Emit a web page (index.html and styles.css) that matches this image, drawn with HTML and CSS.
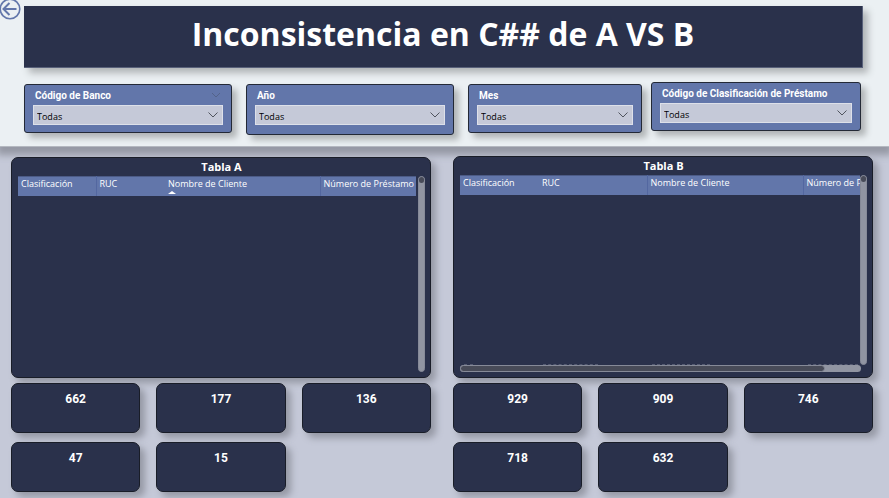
FILE: index.html
```html
<!DOCTYPE html>
<html lang="es">
<head>
<meta charset="utf-8">
<meta name="viewport" content="width=device-width, initial-scale=1">
<title>Inconsistencia en C## de A VS B</title>
<link rel="stylesheet" href="styles.css">
</head>
<body>
<header class="top">
  <button class="back" type="button" aria-label="Atrás">
    <svg viewBox="0 0 22 22" fill="none" stroke="#6276aa"><circle cx="11" cy="11" r="9.8" stroke-width="1.6"/><path d="M17.5 11H5M10.5 5L4.500 11l6 6" stroke-width="2"/></svg>
  </button>
  <h1 class="title">Inconsistencia en C## de A VS B</h1>
  <div class="filters">
    <div class="filter-group">
      <div class="filter">
        <label for="banco">Código de Banco</label>
        <svg class="ghost" viewBox="0 0 10 6"><path d="M1 1l4 4 4-4"/></svg>
        <div class="pick"><select id="banco"><option>Todas</option></select><svg viewBox="0 0 10 6"><path d="M.5 .5L5 5 9.500 .5"/></svg></div>
      </div>
      <div class="filter tall">
        <label for="anio">Año</label>
        <div class="pick"><select id="anio"><option>Todas</option></select><svg viewBox="0 0 10 6"><path d="M.5 .5L5 5 9.500 .5"/></svg></div>
      </div>
      <div class="filter">
        <label for="mes">Mes</label>
        <div class="pick"><select id="mes"><option>Todas</option></select><svg viewBox="0 0 10 6"><path d="M.5 .5L5 5 9.500 .5"/></svg></div>
      </div>
    </div>
    <div class="filter">
      <label for="clas">Código de Clasificación de Préstamo</label>
      <div class="pick"><select id="clas"><option>Todas</option></select><svg viewBox="0 0 10 6"><path d="M.5 .5L5 5 9.500 .5"/></svg></div>
    </div>
  </div>
</header>
<main class="board">
  <section class="side side-a">
    <div class="panel">
      <h2>Tabla A</h2>
      <div class="view">
        <div class="clip">
          <table>
            <colgroup><col class="a1"><col class="a2"><col class="a3"><col></colgroup>
            <thead><tr><th>Clasificación</th><th class="open">RUC</th><th class="sorted">Nombre de Cliente</th><th>Número de Préstamo</th></tr></thead>
          </table>
        </div>
        <div class="vbar"></div>
      </div>
    </div>
    <div class="cards">
      <div class="card">662</div><div class="card">177</div><div class="card">136</div>
      <div class="card">47</div><div class="card">15</div>
    </div>
  </section>
  <section class="side side-b">
    <div class="panel">
      <h2>Tabla B</h2>
      <div class="view">
        <div class="clip">
          <table>
            <colgroup><col class="b1"><col class="b2"><col class="b3"><col></colgroup>
            <thead><tr><th class="open">Clasificación</th><th>RUC</th><th>Nombre de Cliente</th><th>Número de Préstamo</th></tr></thead>
          </table>
          <div class="peek"><i class="p1"></i><i class="p2"></i><i class="p3"></i><i class="p4"></i></div>
        </div>
        <div class="vbar"></div>
      </div>
      <div class="hbar"><div class="thumb"></div></div>
    </div>
    <div class="cards">
      <div class="card">929</div><div class="card">909</div><div class="card">746</div>
      <div class="card">718</div><div class="card">632</div>
    </div>
  </section>
</main>
</body>
</html>
```
FILE: styles.css
```css
* { box-sizing: border-box; }
body {
  margin: 0;
  min-height: 100vh;
  display: flex;
  flex-direction: column;
  background: #c5c9d8;
  font-family: "Open Sans", "Noto Sans", sans-serif;
  color: #fff;
}
.top {
  position: relative;
  padding: 6px 26px 11px 24px;
  background: #ebf0f3;
  border-bottom: 1px solid #b4b8c0;
  box-shadow: 0 5px 7px 3px #9598a4;
}
.back {
  position: absolute;
  left: -1px;
  top: -2px;
  width: 22px;
  height: 22px;
  padding: 0;
  border: 0;
  background: none;
}
.back svg { display: block; }
.title {
  margin: 0;
  height: 62px;
  background: #2a314b;
  border: solid #59617a;
  border-width: 0 1px 1px 0;
  box-shadow: 5px 5px 7px #b0b4b6;
  text-align: center;
  font-size: 32px;
  line-height: 56px;
  font-weight: 700;
  white-space: nowrap;
}
.filters {
  display: grid;
  grid-template-columns: 618fr 210fr;
  gap: 9px;
  align-items: start;
  margin: 14px 2px 0 0;
}
.filter-group {
  display: grid;
  grid-template-columns: 208fr 208fr 174fr;
  gap: 14px;
  align-items: start;
  padding-top: 2px;
}
.filter {
  position: relative;
  height: 49px;
  padding: 4px 8px;
  background: #6276aa;
  border: 1px solid #232936;
  border-radius: 3px;
  box-shadow: 5px 5px 6px #b0b4b6;
}
.tall { height: 51px; }
.filter label {
  display: block;
  padding-left: 2px;
  font: 700 10px/14px Roboto, "Open Sans", sans-serif;
  white-space: nowrap;
}
.ghost {
  position: absolute;
  right: 10px;
  top: 7px;
  width: 10px;
  height: 6px;
  fill: none;
  stroke: #53638a;
}
.pick { position: relative; margin-top: 2px; }
.pick select {
  display: block;
  width: 100%;
  height: 20px;
  padding: 3px 3px 0;
  appearance: none;
  background: #c5c9d8;
  border: 1px solid #dde0e9;
  border-radius: 0;
  color: #000;
  font: 9px/14px "Open Sans", sans-serif;
}
.pick svg {
  position: absolute;
  right: 5px;
  top: 7px;
  width: 10px;
  height: 6px;
  fill: none;
  stroke: #50545e;
  pointer-events: none;
}
.board {
  position: relative;
  display: grid;
  grid-template-columns: 1fr 1fr;
  gap: 22px;
  padding: 9px 16px 6px 11px;
}
.side { display: flex; flex-direction: column; gap: 5px; }
.side-a { padding-top: 1px; }
.panel {
  flex: 1;
  display: flex;
  flex-direction: column;
  min-height: 221px;
  padding: 0 5px 5px 6px;
  background: #2a314b;
  border: 1px solid #191d28;
  border-radius: 7px;
  box-shadow: 5px 5px 7px #9598a4;
}
.panel h2 {
  margin: 0;
  text-align: center;
  font-size: 11px;
  line-height: 18px;
  font-weight: 700;
}
.view { flex: 1; display: flex; gap: 2px; }
.side-b .view { gap: 0; }
.clip {
  flex: 1;
  min-width: 0;
  overflow: hidden;
  display: flex;
  flex-direction: column;
  justify-content: space-between;
}
table { width: 100%; table-layout: fixed; border-collapse: collapse; background: #6276aa; border-top: 1px solid #4c5b86; }
.a1 { width: 78px; }
.a2 { width: 69px; }
.a3 { width: 155px; }
.b1 { width: 79px; }
.b2 { width: 108px; }
.b3 { width: 156px; }
th {
  position: relative;
  height: 19px;
  padding: 0 0 5px 3px;
  border-right: 1px solid #5367a0;
  overflow: hidden;
  text-align: left;
  font-size: 9px;
  line-height: 14px;
  font-weight: 400;
  white-space: nowrap;
}
th:last-child, th.open { border-right: 0; }
.sorted::after {
  content: "";
  position: absolute;
  left: 3px;
  bottom: 2px;
  border: solid transparent;
  border-width: 0 4px 3px;
  border-bottom-color: #fff;
}
.vbar {
  width: 7px;
  background: #9195a2;
  border: 1px solid #868a98;
  border-radius: 4px;
}
.vbar::before {
  content: "";
  display: block;
  height: 6px;
  border-radius: 3px;
  background: #484b58;
}
.hbar { height: 7px; margin-right: 6px; background: #9195a2; border-radius: 4px; }
.thumb { width: 91%; height: 7px; background: #484b58; border: 1px solid #868a98; border-radius: 4px; }
.peek { display: grid; grid-template-columns: 79px 109px 156px 1fr; padding-left: 4px; }
.peek i { border-top: 1px dashed #555b72; }
.p1 { width: 9px; }
.p2 { width: 55px; }
.p3 { width: 58px; }
.p4 { width: 50px; }
.cards {
  display: grid;
  grid-template-columns: repeat(3, 1fr);
  gap: 9px 16px;
}
.card {
  height: 50px;
  padding-top: 7px;
  background: #2a314b;
  border: 1px solid #191d28;
  border-radius: 7px;
  box-shadow: 5px 5px 7px #9598a4;
  text-align: center;
  font: 700 12px/16px Roboto, "Open Sans", sans-serif;
}
```
